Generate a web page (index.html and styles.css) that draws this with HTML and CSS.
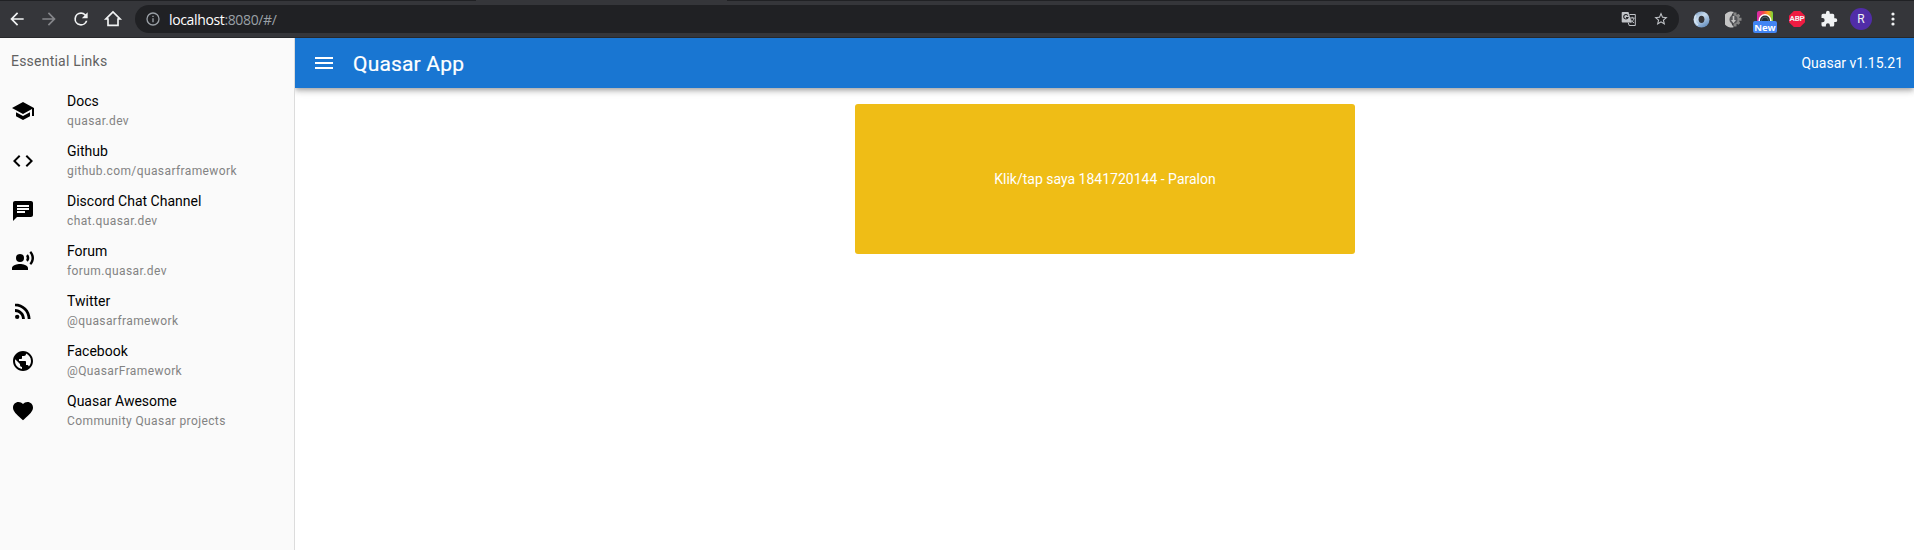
FILE: index.html
```html
<!DOCTYPE html>
<html lang="en">
<head>
<meta charset="utf-8">
<title>Quasar App</title>
<link rel="stylesheet" href="styles.css">
</head>
<body>
<div class="browser">
  <div class="tab-strip"><span class="tab-rest-left"></span><span class="tab-rest-right"></span></div>
  <div class="browser-bar">
    <svg class="nav-icon" viewBox="0 0 24 24"><path d="M20 11H7.800l5.600-5.600L12 4l-8 8 8 8 1.400-1.400L7.800 13H20z"/></svg>
    <svg class="nav-icon nav-disabled" viewBox="0 0 24 24"><path d="M4 11h12.200l-5.600-5.600L12 4l8 8-8 8-1.400-1.400 5.600-5.600H4z"/></svg>
    <svg class="nav-icon" viewBox="0 0 24 24"><path d="M17.650 6.350A7.960 7.960 0 0 0 12 4a8 8 0 1 0 7.730 10h-2.080A6 6 0 1 1 12 6c1.660 0 3.140.69 4.220 1.780L13 11h7V4z"/></svg>
    <svg class="nav-icon" viewBox="0 0 24 24"><path d="M12 3.500 3.500 12H6v7.700h12V12h2.500z" fill="none" stroke="currentColor" stroke-width="2"/></svg>
    <div class="omnibox">
      <svg class="info-icon" viewBox="0 0 24 24"><path d="M11 7h2v2h-2zm0 4h2v6h-2zm1-9a10 10 0 1 0 0 20 10 10 0 0 0 0-20zm0 18a8 8 0 1 1 0-16 8 8 0 0 1 0 16z"/></svg>
      <div class="url"><span class="host">localhost</span>:8080/#/</div>
      <svg class="omni-icon" viewBox="0 0 16 16"><path d="M1.500 1h6l3 10.500h-9a.8.8 0 0 1-.8-.8V1.800a.8.8 0 0 1 .8-.8z"/><path d="M6.800 4.600A2.200 2.200 0 1 0 7 6.500H5" fill="none" stroke="#202124" stroke-width="1.100"/><path d="M8.500 3.500h5.800v11H8.200l-1-3M8.700 7h4.800m-2.300-1.200V7m1.800 0c-.4 2-1.700 3.500-3.400 4.500M9.600 8.300c.8 1.800 2 2.700 3.400 3.400" fill="none" stroke="currentColor"/></svg>
      <svg class="omni-icon" viewBox="0 0 24 24"><path d="m22 9.240-7.190-.62L12 2 9.190 8.630 2 9.240l5.460 4.730L5.820 21 12 17.270 18.180 21l-1.630-7.030zM12 15.400l-3.760 2.270 1-4.280-3.320-2.880 4.380-.38L12 6.100l1.710 4.040 4.380.38-3.320 2.880 1 4.280z"/></svg>
    </div>
    <div class="extensions">
      <span class="ext"><svg width="17" height="17" viewBox="0 0 17 17"><defs><linearGradient id="ring" x1="0" y1="0" x2=".6" y2="1"><stop offset="0" stop-color="#6c91ba"/><stop offset=".45" stop-color="#c9dcee"/><stop offset="1" stop-color="#6c94c2"/></linearGradient></defs><circle cx="8.500" cy="8.500" r="8" fill="url(#ring)"/><path d="M3 4A7 7 0 0 0 5 14" stroke="#d5e4f2" stroke-width="1.500" fill="none"/><ellipse cx="8.500" cy="8.300" rx="2.900" ry="3.600" fill="#35363a"/></svg></span>
      <span class="ext"><svg width="17" height="17" viewBox="0 0 17 17"><path d="M9 1A8 8 0 1 0 9 16C5 14 5 3 9 1z" fill="#c4c4c4"/><path d="M8.500 1.500h3V4l2-1.200 1.700 1.700L14 6.800h2.500v3H14l1.200 2.200-1.700 1.700-2-1V15.500h-3z" fill="#858585"/><circle cx="8.500" cy="8.500" r="4" fill="#55565a"/><path d="M7.700 5h1.600v4H11l-2.500 3.200L6 9h1.700z" fill="#c4c4c4"/></svg></span>
      <span class="ext camera"><svg width="16" height="17" viewBox="0 0 16 17"><defs><linearGradient id="rainbow"><stop stop-color="#d526b4"/><stop offset=".4" stop-color="#f44848"/><stop offset=".7" stop-color="#ffa51e"/><stop offset="1" stop-color="#70d83a"/></linearGradient></defs><rect width="16" height="16" rx="2" fill="url(#rainbow)"/><circle cx="8" cy="9.500" r="6.500" fill="#fff"/><circle cx="8" cy="9.500" r="5" fill="#202c35"/><circle cx="8" cy="9.500" r="3.400" fill="none" stroke="#55656b"/></svg><span class="new-badge">New</span></span>
      <span class="ext"><span class="abp">ABP</span></span>
      <span class="ext"><svg width="18" height="18" viewBox="0 0 24 24" fill="#f1f3f4"><path d="M20.500 11H19V7a2 2 0 0 0-2-2h-4V3.500a2.500 2.500 0 0 0-5 0V5H4a2 2 0 0 0-2 2v3.800h1.500a2.700 2.700 0 0 1 0 5.400H2V20c0 1.100.9 2 2 2h3.800v-1.500a2.700 2.700 0 0 1 5.400 0V22H17a2 2 0 0 0 2-2v-4h1.500a2.500 2.500 0 0 0 0-5z"/></svg></span>
      <span class="ext"><span class="avatar">R</span></span>
      <span class="ext"><svg width="20" height="20" viewBox="0 0 20 20" fill="#f1f3f4"><circle cx="10" cy="5" r="1.600"/><circle cx="10" cy="10" r="1.600"/><circle cx="10" cy="15" r="1.600"/></svg></span>
    </div>
  </div>
</div>
<div class="app">
  <aside class="drawer">
    <div class="drawer-title">Essential Links</div>
    <nav class="links">
      <a class="link"><svg class="link-icon" viewBox="0 0 24 24"><path d="M5 13.180v4L12 21l7-3.820v-4L12 17l-7-3.820zM12 3 1 9l11 6 9-4.910V17h2V9L12 3z"/></svg><span class="link-text"><span class="label">Docs</span><span class="caption">quasar.dev</span></span></a>
      <a class="link"><svg class="link-icon" viewBox="0 0 24 24"><path d="M9.400 16.600 4.800 12l4.600-4.600L8 6l-6 6 6 6 1.400-1.400zm5.200 0 4.600-4.600-4.600-4.600L16 6l6 6-6 6-1.400-1.400z"/></svg><span class="link-text"><span class="label">Github</span><span class="caption">github.com/quasarframework</span></span></a>
      <a class="link"><svg class="link-icon" viewBox="0 0 24 24"><path d="M20 2H4c-1.100 0-1.990.9-1.990 2L2 22l4-4h14c1.100 0 2-.9 2-2V4c0-1.100-.9-2-2-2zM6 9h12v2H6V9zm8 5H6v-2h8v2zm4-6H6V6h12v2z"/></svg><span class="link-text"><span class="label">Discord Chat Channel</span><span class="caption">chat.quasar.dev</span></span></a>
      <a class="link"><svg class="link-icon" viewBox="0 0 24 24"><circle cx="9" cy="9" r="4"/><path d="M9 15c-2.670 0-8 1.340-8 4v2h16v-2c0-2.660-5.330-4-8-4zm7.760-9.640-1.680 1.690c.84 1.180.84 2.710 0 3.890l1.680 1.690c2.020-2.020 2.020-5.070 0-7.270zM20.070 2l-1.630 1.630c2.770 3.020 2.770 7.560 0 10.740L20.070 16c3.900-3.890 3.910-9.950 0-14z"/></svg><span class="link-text"><span class="label">Forum</span><span class="caption">forum.quasar.dev</span></span></a>
      <a class="link"><svg class="link-icon" viewBox="0 0 24 24"><circle cx="6.180" cy="17.820" r="2.180"/><path d="M4 4.440v2.830c7.030 0 12.730 5.700 12.730 12.730h2.830c0-8.590-6.970-15.560-15.560-15.560zm0 5.660v2.830c3.900 0 7.070 3.170 7.070 7.070h2.830c0-5.470-4.430-9.900-9.900-9.900z"/></svg><span class="link-text"><span class="label">Twitter</span><span class="caption">@quasarframework</span></span></a>
      <a class="link"><svg class="link-icon" viewBox="0 0 24 24"><path d="M12 2C6.480 2 2 6.480 2 12s4.480 10 10 10 10-4.480 10-10S17.520 2 12 2zm-1 17.930c-3.950-.49-7-3.850-7-7.930 0-.62.08-1.210.21-1.790L9 15v1c0 1.100.9 2 2 2v1.930zm6.900-2.540c-.26-.81-1-1.390-1.900-1.390h-1v-3c0-.55-.45-1-1-1H8v-2h2c.55 0 1-.45 1-1V7h2c1.100 0 2-.9 2-2v-.41c2.930 1.190 5 4.060 5 7.410 0 2.080-.8 3.970-2.100 5.390z"/></svg><span class="link-text"><span class="label">Facebook</span><span class="caption">@QuasarFramework</span></span></a>
      <a class="link"><svg class="link-icon" viewBox="0 0 24 24"><path d="m12 21.350-1.450-1.320C5.400 15.360 2 12.280 2 8.500 2 5.420 4.420 3 7.500 3c1.740 0 3.410.81 4.500 2.090C13.090 3.810 14.760 3 16.500 3 19.580 3 22 5.420 22 8.500c0 3.780-3.400 6.860-8.550 11.540L12 21.350z"/></svg><span class="link-text"><span class="label">Quasar Awesome</span><span class="caption">Community Quasar projects</span></span></a>
    </nav>
  </aside>
  <div class="main">
    <header class="toolbar">
      <svg class="menu-icon" viewBox="0 0 24 24"><path d="M3 18h18v-2H3v2zm0-5h18v-2H3v2zm0-7v2h18V6H3z"/></svg>
      <div class="toolbar-title">Quasar App</div>
      <div class="version">Quasar v1.15.21</div>
    </header>
    <main class="page"><button class="tap-button">Klik/tap saya 1841720144 - Paralon</button></main>
  </div>
</div>
</body>
</html>
```
FILE: styles.css
```css
* { box-sizing: border-box; }
body { margin: 0; height: 550px; overflow: hidden; display: flex; flex-direction: column; background: #fff; font-family: Roboto, "Liberation Sans", sans-serif; font-size: 14px; color: #000; }
svg { display: block; flex: none; }
.browser { height: 38px; flex: none; background: #35363a; border-bottom: 1px solid #27282b; color: #f1f3f4; }
.tab-strip { height: 1px; display: flex; justify-content: space-between; }
.tab-rest-left { width: 476px; background: #202124; }
.tab-rest-right { width: 1187px; background: #202124; }
.browser-bar { height: 36px; display: flex; align-items: center; padding-left: 7px; }
.nav-icon { width: 20px; height: 20px; margin-right: 12px; fill: currentColor; }
.nav-disabled { color: #85868a; }
.omnibox { width: 1544px; height: 28px; border-radius: 14px; background: #202124; display: flex; align-items: center; padding: 0 10px; color: #c1c4c8; }
.info-icon { width: 16px; height: 16px; fill: #9aa0a6; }
.url { flex: 1; padding-left: 8px; font: 14px "Open Sans", "Noto Sans", sans-serif; letter-spacing: -.36px; color: #9aa0a6; }
.host { color: #fff; }
.omni-icon { width: 16px; height: 16px; margin-left: 16px; fill: currentColor; }
.extensions { display: flex; padding-left: 6px; }
.ext { width: 32px; height: 28px; display: flex; align-items: center; justify-content: center; position: relative; }
.new-badge { position: absolute; left: 4px; top: 16px; width: 24px; height: 12px; border-radius: 2px; background: #4285f4; color: #fff; font: bold 9.500px/13px "Open Sans", sans-serif; text-align: center; }
.abp { width: 16px; height: 16px; background: #ee1c42; clip-path: polygon(30% 0, 70% 0, 100% 30%, 100% 70%, 70% 100%, 30% 100%, 0 70%, 0 30%); display: flex; justify-content: center; font: bold 8px/16px Roboto, sans-serif; letter-spacing: -.2px; }
.avatar { width: 22px; height: 22px; border-radius: 50%; background: #512da8; font-size: 12px; line-height: 22px; text-align: center; }
.app { flex: 1; display: flex; min-height: 0; }
.drawer { width: 295px; flex: none; background: #fafafa; border-right: 1px solid #dcdcdc; }
.drawer-title { height: 48px; padding-left: 11px; line-height: 46px; color: #616161; letter-spacing: .22px; }
.link { height: 50px; display: flex; align-items: center; padding-left: 11px; }
.link-icon { width: 24px; height: 24px; }
.link-text { margin-left: 32px; display: flex; flex-direction: column; }
.label { line-height: 20px; }
.caption { font-size: 12px; line-height: 20px; letter-spacing: .4px; color: #838383; }
.main { flex: 1; display: flex; flex-direction: column; }
.toolbar { height: 50px; flex: none; display: flex; align-items: center; padding: 0 11px 0 17px; background: #1976d2; color: #fff; box-shadow: 0 2px 4px -1px rgba(0,0,0,.2), 0 4px 5px rgba(0,0,0,.14), 0 1px 10px rgba(0,0,0,.12); clip-path: inset(0 0 -20px 0); }
.menu-icon { width: 24px; height: 24px; fill: currentColor; }
.toolbar-title { flex: 1; padding: 2px 0 0 17px; font-size: 21px; -webkit-text-stroke: .2px #fff; letter-spacing: .18px; }
.version { letter-spacing: 0; }
.page { padding: 16px 0 0 1px; display: flex; justify-content: center; }
.tap-button { width: 500px; height: 150px; border: 0; border-radius: 3px; padding: 0; background: #efbd16; color: #fff; font: 14px Roboto, sans-serif; }
```
